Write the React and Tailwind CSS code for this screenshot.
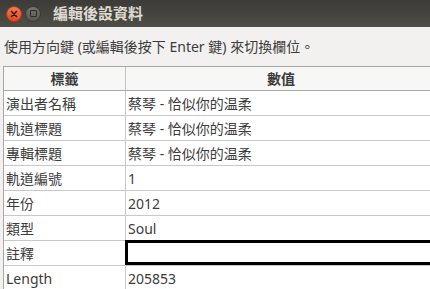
import React from "react";

const rows = [
  ["演出者名稱", "蔡琴 - 恰似你的温柔"],
  ["軌道標題", "蔡琴 - 恰似你的温柔"],
  ["專輯標題", "蔡琴 - 恰似你的温柔"],
  ["軌道編號", "1"],
  ["年份", "2012"],
  ["類型", "Soul"],
  ["註釋", null],
  ["Length", "205853"],
];

export default function App() {
  return (
    <div
      className="w-[430px] h-[289px] overflow-hidden bg-[#f2f1f0] text-[#3c3c3c]"
      style={{ fontFamily: '"Noto Sans", "Noto Sans CJK TC", sans-serif' }}
    >
      <div className="h-[27px] flex items-center bg-gradient-to-b from-[#3c3b37] to-[#4f4d47]">
        <div className="ml-[6px] w-[16px] h-[16px] rounded-full bg-gradient-to-b from-[#f47a4f] to-[#df4a1e] flex items-center justify-center border border-[#b5391a]">
          <svg width="8" height="8" viewBox="0 0 8 8">
            <path d="M1.5 1.5 L6.5 6.5 M6.5 1.5 L1.5 6.5" stroke="#3a1a10" strokeWidth="1.6" strokeLinecap="round" />
          </svg>
        </div>
        <div className="ml-[3px] w-[16px] h-[16px] rounded-full bg-gradient-to-b from-[#75746f] to-[#58574f] flex items-center justify-center border border-[#3a3935]">
          <div className="w-[7px] h-[7px] border-[1.5px] border-[#2c2b28] rounded-[1px]" />
        </div>
        <div className="ml-[12px] text-[15px] font-bold text-[#dfdbd2] leading-none">編輯後設資料</div>
      </div>
      <div className="h-[39px] flex items-center pl-[4px] text-[14px] whitespace-nowrap">
        使用方向鍵 (或編輯後按下 Enter 鍵) 來切換欄位。
      </div>
      <div className="ml-[3px] bg-white border-t border-l border-[#a8a8a8] text-[14px] whitespace-nowrap">
        <div className="flex h-[24px] bg-[#f7f7f6] border-b border-[#a8a8a8]">
          <div className="w-[122px] border-r border-[#c4c4c4] flex items-center justify-center font-bold">標籤</div>
          <div className="flex-1 flex items-center justify-center pl-[6px] font-bold">數值</div>
        </div>
        {rows.map(([k, v]) => (
          <div key={k} className="flex h-[25px] border-b border-[#c8c8c8]">
            <div className="w-[122px] border-r border-[#c8c8c8] flex items-center pl-[2px]">{k}</div>
            {v === null ? (
              <div className="flex-1 -my-[1px] -ml-[1px] h-[25px] border-[3px] border-black bg-white mr-[-6px]" />
            ) : (
              <div className="flex-1 flex items-center pl-[2px]">{v}</div>
            )}
          </div>
        ))}
      </div>
    </div>
  );
}
